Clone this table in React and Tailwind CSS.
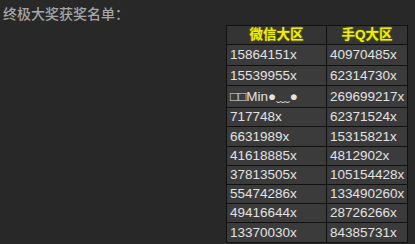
const rows = [
  ["15864151x", "40970485x", "h-[21px]"],
  ["15539955x", "62314730x", "h-[20px]"],
  ["□□Min●﹏●", "269699217x", "h-[22px]"],
  ["717748x", "62371524x", "h-[19px]"],
  ["6631989x", "15315821x", "h-[20px]"],
  ["41618885x", "4812902x", "h-[19px]"],
  ["37813505x", "105154428x", "h-[19px]"],
  ["55474286x", "133490260x", "h-[19px]"],
  ["49416644x", "28726266x", "h-[19px]"],
  ["13370030x", "84385731x", "h-[20px]"],
];

export default function App() {
  return (
    <div
      className="w-[415px] h-[244px] overflow-hidden bg-[#282828] text-[#e2e2e2]"
      style={{ fontFamily: '"Liberation Sans", "Noto Sans CJK SC", sans-serif' }}
    >
      <div className="pl-[3px] pt-[5px] text-[14px] leading-[18px] font-medium text-[#a6a6a6]">
        终极大奖获奖名单：
      </div>
      <div className="pl-[226px] pt-[2px]">
        <table className="border-collapse w-[182px] text-[13.5px]">
          <thead>
            <tr className="bg-[#343434]">
              <th className="border border-[#111] h-[19px] w-[100px] p-0 font-bold text-[#f0f000] leading-[16px] text-center [text-shadow:0_0_2px_#8a8a00]">
                微信大区
              </th>
              <th className="border border-[#111] h-[19px] p-0 font-bold text-[#f0f000] leading-[16px] text-center [text-shadow:0_0_2px_#8a8a00]">
                手Q大区
              </th>
            </tr>
          </thead>
          <tbody>
            {rows.map((r) => (
              <tr key={r[0]} className="bg-[#3b3b3b]">
                <td className={`border border-[#111] p-0 pl-[3px] ${r[2]} leading-[16px]`}>
                  {r[0]}
                </td>
                <td className="border border-[#111] p-0 pl-[3px] leading-[16px]">{r[1]}</td>
              </tr>
            ))}
          </tbody>
        </table>
      </div>
    </div>
  );
}
